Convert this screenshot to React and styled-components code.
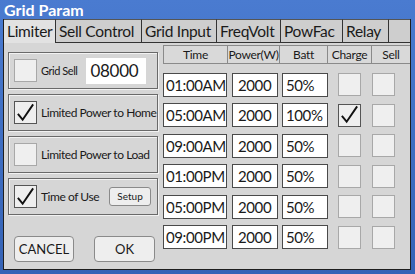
import React from "react";
import styled, { createGlobalStyle } from "styled-components";

const Global = createGlobalStyle`
  body { margin: 0; background: #3d6cc0; }
  * { box-sizing: border-box; }
`;

const Window = styled.div`
  width: 415px;
  height: 274px;
  background: linear-gradient(#4a7bd0, #3563b6);
  display: flex;
  flex-direction: column;
  font-family: "Lato", "Open Sans", sans-serif;
  color: #1a1a1a;
`;

const TitleBar = styled.div`
  height: 19px;
  padding-left: 4px;
  color: #fff;
  font-weight: 700;
  font-size: 16px;
  line-height: 19px;
`;

const Panel = styled.div`
  flex: 1;
  margin: 0 4px 4px 3px;
  background: #d6d6d6;
  border: 1px solid #1e1e1e;
  border-top: none;
  display: flex;
  flex-direction: column;
`;

const TabBar = styled.div`
  display: flex;
  height: 24px;
`;

const Tab = styled.div`
  width: ${(p) => p.w}px;
  flex: ${(p) => (p.grow ? 1 : "none")};
  background: ${(p) => (p.active ? "#e2e2e2" : "#cecece")};
  border-right: 1px solid #333;
  border-bottom: ${(p) => (p.active ? "none" : "1px solid #333")};
  border-top: 1px solid #555;
  font-size: 15.5px;
  letter-spacing: -0.3px;
  line-height: 22px;
  padding-left: 3px;
  white-space: nowrap;
  &:last-child { border-right: none; }
`;

const Body = styled.div`
  flex: 1;
  display: flex;
  padding: 2px 0 0 4px;
`;

const LeftCol = styled.div`
  width: 155px;
  display: flex;
  flex-direction: column;
  gap: 5px;
  padding-top: 7px;
`;

const Group = styled.div`
  width: 150px;
  height: 37px;
  border: 1px solid #6a6a6a;
  box-shadow: inset 1px 1px 0 #f2f2f2, 1px 1px 0 #f2f2f2;
  display: flex;
  align-items: center;
  padding-left: 5px;
  gap: 4px;
`;

const Box = styled.div`
  width: ${(p) => p.size || 23}px;
  height: ${(p) => p.size || 23}px;
  flex: none;
  background: #efefef;
  border: 1px solid ${(p) => (p.dark ? "#555" : "#a8a8a8")};
  display: flex;
  align-items: center;
  justify-content: center;
`;

const Label = styled.span`
  font-size: ${(p) => p.size || 12}px;
  letter-spacing: -0.45px;
  white-space: nowrap;
`;

const SellInput = styled.div`
  width: 60px;
  height: 26px;
  margin-left: 5px;
  background: #fff;
  font-size: 17px;
  letter-spacing: -0.3px;
  line-height: 26px;
  padding-left: 4px;
`;

const SmallButton = styled.div`
  margin-left: 6px;
  width: 42px;
  height: 19px;
  border: 1px solid #8a8a8a;
  border-radius: 3px;
  background: #eeeeee;
  font-size: 10px;
  line-height: 17px;
  text-align: center;
`;

const ButtonRow = styled.div`
  display: flex;
  gap: 20px;
  margin-top: 16px;
  padding-left: 6px;
`;

const Button = styled.div`
  width: ${(p) => p.w}px;
  height: 26px;
  border: 1px solid #8a8a8a;
  border-radius: 4px;
  background: #eeeeee;
  font-size: 13px;
  line-height: 24px;
  text-align: center;
`;

const RightCol = styled.div`
  display: flex;
  flex-direction: column;
  gap: 6.5px;
  padding-left: 1px;
`;

const HeaderRow = styled.div`
  display: flex;
  height: 19px;
  margin-bottom: 2px;
`;

const HeadCell = styled.div`
  width: ${(p) => p.w}px;
  background: #d9d9d9;
  border: 1px solid #8a8a8a;
  border-left: ${(p) => (p.first ? "1px solid #8a8a8a" : "none")};
  border-right: ${(p) => (p.last ? "none" : "1px solid #8a8a8a")};
  font-size: 12px;
  letter-spacing: -0.3px;
  line-height: 17px;
  text-align: center;
  white-space: nowrap;
`;

const Row = styled.div`
  display: flex;
  align-items: center;
  height: 24px;
`;

const Cell = styled.div`
  width: ${(p) => p.w}px;
  height: 24px;
  margin-left: ${(p) => p.ml || 0}px;
  background: #fff;
  border: 1px solid #4a4a4a;
  font-size: 15px;
  letter-spacing: -0.4px;
  line-height: 22px;
  padding-left: ${(p) => p.pl || 2}px;
  white-space: nowrap;
  overflow: hidden;
`;

const CellBox = styled(Box)`
  margin-left: ${(p) => p.ml}px;
`;

const Check = ({ size = 22 }) => (
  <svg width={size} height={size} viewBox="0 0 22 22">
    <path d="M3 12 L8 18 L19 2" fill="none" stroke="#111" strokeWidth="2" />
  </svg>
);

const rows = [
  ["01:00AM", "50%", false],
  ["05:00AM", "100%", true],
  ["09:00AM", "50%", false],
  ["01:00PM", "50%", false],
  ["05:00PM", "50%", false],
  ["09:00PM", "50%", false],
];

export default function App() {
  return (
    <Window>
      <Global />
      <TitleBar>Grid Param</TitleBar>
      <Panel>
        <TabBar>
          <Tab w={52} active>Limiter</Tab>
          <Tab w={86}>Sell Control</Tab>
          <Tab w={75}>Grid Input</Tab>
          <Tab w={64}>FreqVolt</Tab>
          <Tab w={62}>PowFac</Tab>
          <Tab w={46}>Relay</Tab>
          <Tab grow />
        </TabBar>
        <Body>
          <LeftCol>
            <Group>
              <Box />
              <Label size={11}>Grid Sell</Label>
              <SellInput>08000</SellInput>
            </Group>
            <Group>
              <Box dark><Check /></Box>
              <Label>Limited Power to Home</Label>
            </Group>
            <Group>
              <Box />
              <Label>Limited Power to Load</Label>
            </Group>
            <Group>
              <Box dark><Check /></Box>
              <Label>Time of Use</Label>
              <SmallButton>Setup</SmallButton>
            </Group>
            <ButtonRow>
              <Button w={60}>CANCEL</Button>
              <Button w={61}>OK</Button>
            </ButtonRow>
          </LeftCol>
          <RightCol>
            <HeaderRow>
              <HeadCell w={65} first>Time</HeadCell>
              <HeadCell w={52}>Power(W)</HeadCell>
              <HeadCell w={48}>Batt</HeadCell>
              <HeadCell w={44}>Charge</HeadCell>
              <HeadCell w={38} last>Sell</HeadCell>
            </HeaderRow>
            {rows.map(([t, b, c]) => (
              <Row key={t}>
                <Cell w={64}>{t}</Cell>
                <Cell w={46} ml={5} pl={5}>2000</Cell>
                <Cell w={46} ml={4} pl={3}>{b}</Cell>
                <CellBox ml={10} dark={c}>{c && <Check />}</CellBox>
                <CellBox ml={11} />
              </Row>
            ))}
          </RightCol>
        </Body>
      </Panel>
    </Window>
  );
}
